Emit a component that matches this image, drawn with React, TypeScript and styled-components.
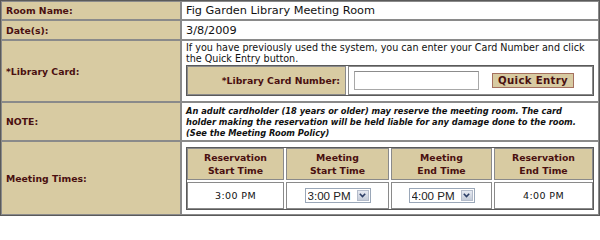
import React from "react";
import styled, { createGlobalStyle } from "styled-components";

const Global = createGlobalStyle`
  html, body { margin: 0; padding: 0; background: #fff; }
  body { font-family: "DejaVu Sans", Verdana, sans-serif; }
`;

const TAN = "#d8cba2";
const MAROON = "#4a1010";

const FormTable = styled.table`
  width: 600px;
  border-collapse: separate;
  border-spacing: 0;
  border: 1px solid #5a5a5a;
  table-layout: fixed;
`;

const Row = styled.tr<{ $h: number }>`
  height: ${(p) => p.$h}px;
`;

const LabelCell = styled.td<{ $h: number }>`
  width: 170px;
  height: ${(p) => p.$h}px;
  padding: 0 4px;
  background: ${TAN};
  color: ${MAROON};
  font-weight: bold;
  font-size: 9.3px;
  border: 1px solid #8a8a8a;
  vertical-align: middle;
  white-space: nowrap;
  overflow: hidden;
`;

const ValueCell = styled.td<{ $h: number }>`
  height: ${(p) => p.$h}px;
  padding: 0 4px;
  background: #fff;
  color: #111;
  font-size: 11.3px;
  border: 1px solid #8a8a8a;
  vertical-align: middle;
  overflow: hidden;
`;

const Paragraph = styled.div`
  font-size: 9.6px;
  line-height: 11.5px;
`;

const Note = styled.div`
  font-family: "DejaVu Sans Condensed", "DejaVu Sans", sans-serif;
  font-stretch: condensed;
  font-size: 9.2px;
  line-height: 11px;
  font-weight: bold;
  font-style: italic;
`;

const Box = styled.div`
  border: 1px solid #5a5a5a;
  display: grid;
  gap: 2px;
`;

const CardBox = styled(Box)`
  grid-template-columns: 159px 1fr;
  height: 29px;
  margin-bottom: 5px;
`;

const SubCell = styled.div<{ $tan?: boolean; $align?: string }>`
  border: 1px solid #8a8a8a;
  background: ${(p) => (p.$tan ? TAN : "#fff")};
  display: flex;
  align-items: center;
  justify-content: ${(p) => p.$align || "center"};
  text-align: center;
`;

const SubLabel = styled.span`
  color: ${MAROON};
  font-weight: bold;
  font-size: 9.3px;
  padding-right: 5px;
  white-space: nowrap;
`;

const EntryCell = styled(SubCell)`
  padding-left: 5px;
  gap: 13px;
`;

const CardInput = styled.input`
  width: 125px;
  height: 19px;
  box-sizing: border-box;
  border: 1px solid #a8a8a8;
  border-top-color: #8c8c8c;
  padding: 0 2px;
  margin: 0;
  outline: none;
  background: #fff;
`;

const QuickButton = styled.button`
  width: 82px;
  height: 15px;
  box-sizing: border-box;
  margin: 0;
  padding: 0;
  background: ${TAN};
  border: 1px solid #a5705f;
  color: ${MAROON};
  font-family: "DejaVu Sans", Verdana, sans-serif;
  font-weight: bold;
  font-size: 10.2px;
  letter-spacing: 0.3px;
  line-height: 13px;
`;

const TimesBox = styled(Box)`
  grid-template-columns: 97px 103px 101px 1fr;
  grid-template-rows: 32px 27px;
`;

const HeadCell = styled(SubCell)`
  color: ${MAROON};
  font-weight: bold;
  font-size: 9.3px;
  line-height: 13px;
`;

const DataCell = styled(SubCell)`
  font-size: 9.5px;
  color: #111;
  letter-spacing: 0.4px;
`;

const SelectWrap = styled.span`
  display: inline-flex;
  align-items: stretch;
  height: 15px;
  box-sizing: border-box;
  border: 1px solid #9aa7b8;
  background: #fff;
`;

const TimeSelect = styled.select`
  appearance: none;
  -webkit-appearance: none;
  border: none;
  outline: none;
  background: transparent;
  margin: 0;
  padding: 0 2px;
  font-family: "Liberation Sans", Arial, sans-serif;
  font-size: 11.6px;
  line-height: 13px;
  color: #222;
  width: 50px;
`;

const ArrowBtn = styled.span`
  width: 12px;
  margin: 1px;
  box-sizing: border-box;
  background: linear-gradient(#e6eaf2, #c4cbd8);
  border: 1px solid #b4bccb;
  display: flex;
  align-items: center;
  justify-content: center;
`;

const Chevron = () => (
  <svg width="7" height="5" viewBox="0 0 7 5">
    <path d="M0.8 0.8 L3.5 3.5 L6.2 0.8" fill="none" stroke="#2c3e66" strokeWidth="1.6" />
  </svg>
);

const TimePicker = ({ value }: { value: string }) => (
  <SelectWrap>
    <TimeSelect defaultValue={value}>
      <option>{value}</option>
    </TimeSelect>
    <ArrowBtn>
      <Chevron />
    </ArrowBtn>
  </SelectWrap>
);

export default function App() {
  return (
    <>
      <Global />
      <FormTable>
        <tbody>
          <Row $h={19}>
            <LabelCell $h={17}>Room Name:</LabelCell>
            <ValueCell $h={17}>Fig Garden Library Meeting Room</ValueCell>
          </Row>
          <Row $h={20}>
            <LabelCell $h={18}>Date(s):</LabelCell>
            <ValueCell $h={18}>3/8/2009</ValueCell>
          </Row>
          <Row $h={62}>
            <LabelCell $h={60}>*Library Card:</LabelCell>
            <ValueCell $h={60}>
              <Paragraph>
                If you have previously used the system, you can enter your Card Number and click the
                Quick Entry button.
              </Paragraph>
              <CardBox>
                <SubCell $tan $align="flex-end">
                  <SubLabel>*Library Card Number:</SubLabel>
                </SubCell>
                <EntryCell $align="flex-start">
                  <CardInput type="text" />
                  <QuickButton type="button">Quick Entry</QuickButton>
                </EntryCell>
              </CardBox>
            </ValueCell>
          </Row>
          <Row $h={39}>
            <LabelCell $h={37}>NOTE:</LabelCell>
            <ValueCell $h={37}>
              <Note>
                An adult cardholder (18 years or older) may reserve the meeting room. The card holder
                making the reservation will be held liable for any damage done to the room. (See the
                Meeting Room Policy)
              </Note>
            </ValueCell>
          </Row>
          <Row $h={74}>
            <LabelCell $h={72}>Meeting Times:</LabelCell>
            <ValueCell $h={72}>
              <TimesBox>
                <HeadCell $tan>
                  Reservation
                  <br />
                  Start Time
                </HeadCell>
                <HeadCell $tan>
                  Meeting
                  <br />
                  Start Time
                </HeadCell>
                <HeadCell $tan>
                  Meeting
                  <br />
                  End Time
                </HeadCell>
                <HeadCell $tan>
                  Reservation
                  <br />
                  End Time
                </HeadCell>
                <DataCell>3:00 PM</DataCell>
                <DataCell>
                  <TimePicker value="3:00 PM" />
                </DataCell>
                <DataCell>
                  <TimePicker value="4:00 PM" />
                </DataCell>
                <DataCell>4:00 PM</DataCell>
              </TimesBox>
            </ValueCell>
          </Row>
        </tbody>
      </FormTable>
    </>
  );
}
